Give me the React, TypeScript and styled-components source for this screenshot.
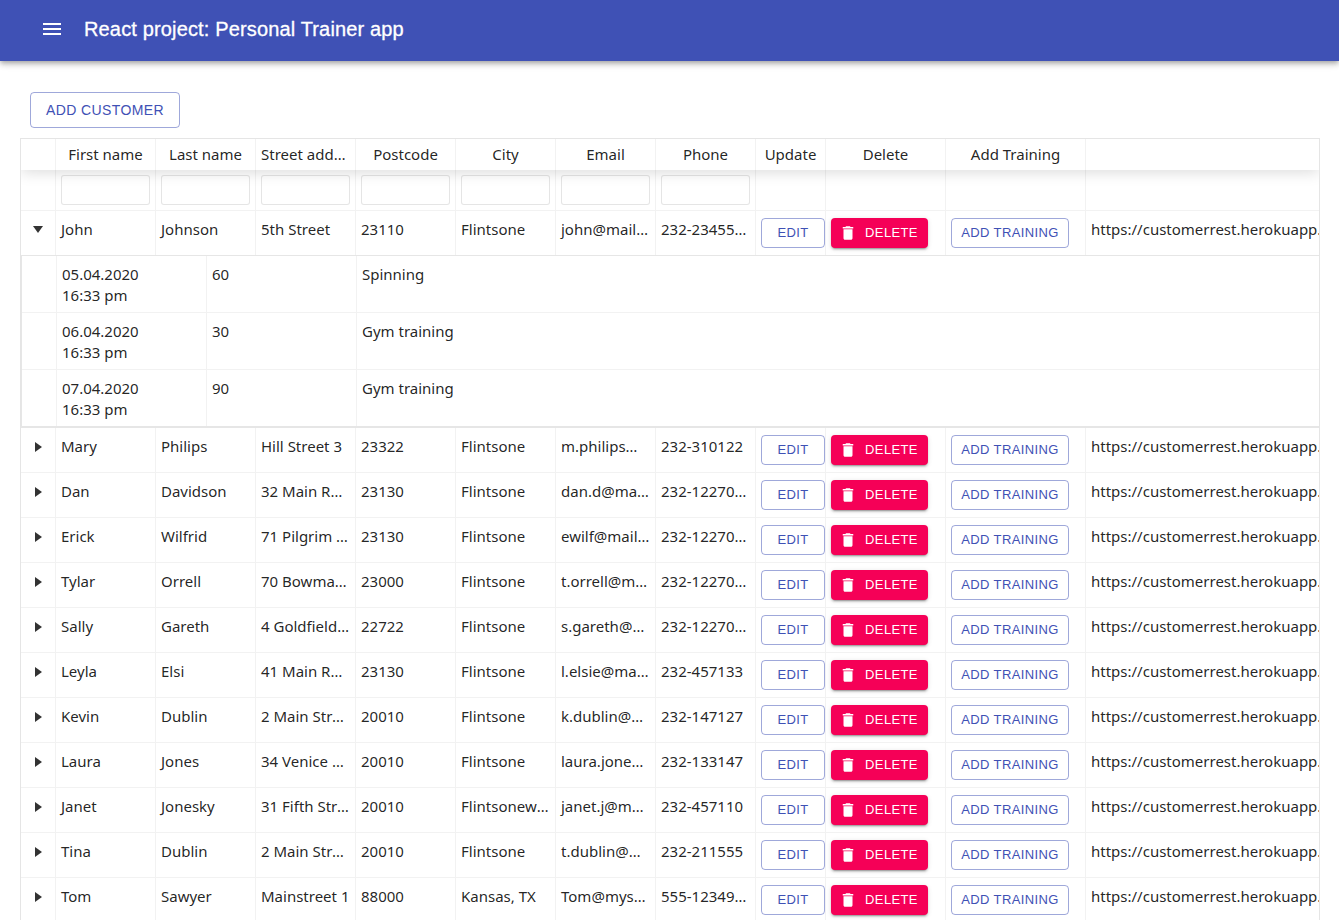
import styled, { createGlobalStyle } from "styled-components";

const GlobalStyle = createGlobalStyle`
  html, body {
    margin: 0;
    padding: 0;
    height: 920px;
    overflow: hidden;
    background: #fff;
  }
  body {
    font-family: "Noto Sans", "Open Sans", sans-serif;
    font-size: 15px;
    color: rgba(0, 0, 0, 0.87);
  }
`;

const customers = [
  ["Mary", "Philips", "Hill Street 3", "23322", "Flintsone", "m.philips@mail.com", "232-310122"],
  ["Dan", "Davidson", "32 Main Road", "23130", "Flintsone", "dan.d@mail.com", "232-12270001"],
  ["Erick", "Wilfrid", "71 Pilgrim Avenue", "23130", "Flintsone", "ewilf@mail.com", "232-12270002"],
  ["Tylar", "Orrell", "70 Bowman St.", "23000", "Flintsone", "t.orrell@mail.com", "232-12270003"],
  ["Sally", "Gareth", "4 Goldfield Rd.", "22722", "Flintsone", "s.gareth@mail.com", "232-12270004"],
  ["Leyla", "Elsi", "41 Main Road", "23130", "Flintsone", "l.elsie@mail.com", "232-457133"],
  ["Kevin", "Dublin", "2 Main Street", "20010", "Flintsone", "k.dublin@mail.com", "232-147127"],
  ["Laura", "Jones", "34 Venice Road", "20010", "Flintsone", "laura.jones@mail.com", "232-133147"],
  ["Janet", "Jonesky", "31 Fifth Street", "20010", "Flintsonewood", "janet.j@mail.com", "232-457110"],
  ["Tina", "Dublin", "2 Main Street", "20010", "Flintsone", "t.dublin@mail.com", "232-211555"],
  ["Tom", "Sawyer", "Mainstreet 1", "88000", "Kansas, TX", "Tom@mystery.com", "555-12349876"],
];

const trainings = [
  ["05.04.2020 16:33 pm", "60", "Spinning"],
  ["06.04.2020 16:33 pm", "30", "Gym training"],
  ["07.04.2020 16:33 pm", "90", "Gym training"],
];

const headers: [string, number][] = [
  ["", 35],
  ["First name", 100],
  ["Last name", 100],
  ["Street address", 100],
  ["Postcode", 100],
  ["City", 100],
  ["Email", 100],
  ["Phone", 100],
  ["Update", 70],
  ["Delete", 120],
  ["Add Training", 140],
];

const AppBar = styled.header`
  height: 61px;
  box-sizing: border-box;
  display: flex;
  align-items: center;
  padding: 0 0 3px 40px;
  gap: 20px;
  background: #3f51b5;
  color: #fff;
  box-shadow: 0 2px 4px -1px rgba(0, 0, 0, 0.2), 0 4px 5px 0 rgba(0, 0, 0, 0.14),
    0 1px 10px 0 rgba(0, 0, 0, 0.12);
  position: relative;
`;

const Title = styled.h6`
  margin: 0;
  font: 400 20px/1.6 "Liberation Sans", Arial, sans-serif;
  letter-spacing: 0.0075em;
  -webkit-text-stroke: 0.3px #fff;
`;

const Page = styled.main`
  padding: 31px 19px 0 20px;
`;

const Button = styled.button<{ $size?: "small" | "medium" }>`
  box-sizing: border-box;
  display: inline-flex;
  align-items: center;
  justify-content: center;
  background: transparent;
  color: #3f51b5;
  border: 1px solid rgba(63, 81, 181, 0.5);
  border-radius: 4px;
  font-family: "Liberation Sans", Arial, sans-serif;
  font-weight: 400;
  letter-spacing: 0.02857em;
  text-transform: uppercase;
  font-size: ${(p) => (p.$size === "small" ? "13px" : "14px")};
  height: ${(p) => (p.$size === "small" ? "30px" : "36px")};
  padding: ${(p) => (p.$size === "small" ? "0 9px 2px" : "0 15px")};
`;

const AddCustomer = styled(Button)`
  margin-left: 10px;
  margin-bottom: 10px;
  display: flex;
`;

const EditButton = styled(Button)`
  width: 64px;
`;

const TrainingButton = styled(Button)`
  width: 118px;
  white-space: nowrap;
`;

const DeleteButton = styled(Button)`
  width: 97px;
  gap: 8px;
  padding: 0 2px 2px 0;
  background: #f50057;
  color: #fff;
  border: none;
  box-shadow: 0 3px 1px -2px rgba(0, 0, 0, 0.2), 0 2px 2px 0 rgba(0, 0, 0, 0.14),
    0 1px 5px 0 rgba(0, 0, 0, 0.12);
  svg {
    margin-top: 2px;
  }
`;

const Table = styled.div`
  border: 1px solid rgba(0, 0, 0, 0.1);
  overflow: hidden;
`;

const HeadRow = styled.div`
  display: flex;
  height: 31px;
  position: relative;
  box-shadow: 0 2px 15px 0 rgba(0, 0, 0, 0.15);
`;

const HeadCell = styled.div<{ $w: number }>`
  box-sizing: border-box;
  width: ${(p) => p.$w}px;
  flex: none;
  padding: 5px;
  line-height: 21px;
  text-align: center;
  white-space: nowrap;
  overflow: hidden;
  text-overflow: ellipsis;
  border-right: 1px solid rgba(0, 0, 0, 0.05);
`;

const FilterRow = styled.div`
  display: flex;
  height: 41px;
  border-bottom: 1px solid rgba(0, 0, 0, 0.05);
  box-sizing: border-box;
`;

const FilterCell = styled.div<{ $w: number }>`
  box-sizing: border-box;
  width: ${(p) => p.$w}px;
  flex: none;
  padding: 5px;
  border-right: 1px solid rgba(0, 0, 0, 0.05);
`;

const FilterInput = styled.input`
  box-sizing: border-box;
  display: block;
  width: 100%;
  height: 30px;
  background: #fff;
  border: 1px solid rgba(0, 0, 0, 0.1);
  border-radius: 3px;
  outline: none;
`;

const Row = styled.div`
  display: flex;
  height: 45px;
  box-sizing: border-box;
  border-bottom: 1px solid rgba(0, 0, 0, 0.05);
`;

const Cell = styled.div<{ $w?: number }>`
  box-sizing: border-box;
  flex: ${(p) => (p.$w ? `none` : "1 1 0")};
  min-width: 0;
  width: ${(p) => (p.$w ? `${p.$w}px` : "auto")};
  padding: 8px 5px 6px;
  line-height: 21px;
  white-space: nowrap;
  overflow: hidden;
  text-overflow: ellipsis;
  border-right: 1px solid rgba(0, 0, 0, 0.05);
`;

const ActionCell = styled(Cell)`
  padding: 7px 5px;
`;

const UrlCell = styled(Cell)`
  padding-right: 0;
  text-overflow: clip;
  border-right: none;
`;

const Expander = styled(Cell)`
  display: flex;
  justify-content: center;
  padding: 14px 0 0;
`;

const Arrow = styled.span<{ $open?: boolean }>`
  width: 0;
  height: 0;
  border-style: solid;
  border-color: transparent;
  border-width: ${(p) => (p.$open ? "7px 5.5px 0" : "5.5px 0 5.5px 7px")};
  border-top-color: ${(p) => (p.$open ? "rgba(0,0,0,.8)" : "transparent")};
  border-left-color: ${(p) => (p.$open ? "transparent" : "rgba(0,0,0,.8)")};
  margin-top: ${(p) => (p.$open ? "1px" : "0")};
`;

const SubTable = styled.div`
  border: solid #e6e6e6;
  border-width: 1px 0 2px 1px;
  height: 173px;
  margin-top: -1px;
  box-sizing: border-box;
`;

const SubRow = styled.div`
  display: flex;
  height: 57px;
  box-sizing: border-box;
  border-bottom: 1px solid rgba(0, 0, 0, 0.05);
  &:last-child {
    height: 56px;
    border-bottom: none;
  }
`;

const SubCell = styled.div<{ $w?: number }>`
  box-sizing: border-box;
  flex: ${(p) => (p.$w ? "none" : "1 1 0")};
  width: ${(p) => (p.$w ? `${p.$w}px` : "auto")};
  padding: 8px 5px 0;
  line-height: 21px;
  border-right: 1px solid rgba(0, 0, 0, 0.05);
  &:last-child {
    border-right: none;
  }
`;

const DateText = styled.span`
  display: block;
  width: 100px;
`;

const MenuIcon = () => (
  <svg width="24" height="24" viewBox="0 0 24 24" fill="currentColor">
    <path d="M3 18h18v-2H3v2zm0-5h18v-2H3v2zm0-7v2h18V6H3z" />
  </svg>
);

const TrashIcon = () => (
  <svg width="18" height="18" viewBox="0 0 24 24" fill="currentColor">
    <path d="M6 19c0 1.1.9 2 2 2h8c1.1 0 2-.9 2-2V7H6v12zM19 4h-3.5l-1-1h-5l-1 1H5v2h14V4z" />
  </svg>
);

function CustomerRow({ data, open, id }: { data: string[]; open?: boolean; id: number }) {
  return (
    <Row>
      <Expander $w={35}>
        <Arrow $open={open} />
      </Expander>
      {data.map((value, i) => (
        <Cell $w={100} key={i}>
          {value}
        </Cell>
      ))}
      <ActionCell $w={70}>
        <EditButton $size="small">Edit</EditButton>
      </ActionCell>
      <ActionCell $w={120}>
        <DeleteButton $size="small">
          <TrashIcon />
          Delete
        </DeleteButton>
      </ActionCell>
      <ActionCell $w={140}>
        <TrainingButton $size="small">Add training</TrainingButton>
      </ActionCell>
      <UrlCell>https://customerrest.herokuapp.com/api/customers/{id}</UrlCell>
    </Row>
  );
}

export default function App() {
  return (
    <>
      <GlobalStyle />
      <AppBar>
        <MenuIcon />
        <Title>React project: Personal Trainer app</Title>
      </AppBar>
      <Page>
        <AddCustomer>Add customer</AddCustomer>
        <Table>
          <HeadRow>
            {headers.map(([label, w]) => (
              <HeadCell $w={w} key={label}>
                {label}
              </HeadCell>
            ))}
          </HeadRow>
          <FilterRow>
            {headers.map(([label, w], i) => (
              <FilterCell $w={w} key={label}>
                {i >= 1 && i <= 7 && <FilterInput />}
              </FilterCell>
            ))}
          </FilterRow>
          <CustomerRow
            open
            id={1}
            data={["John", "Johnson", "5th Street", "23110", "Flintsone", "john@mail.com", "232-2345540"]}
          />
          <SubTable>
            {trainings.map(([date, duration, activity]) => (
              <SubRow key={date}>
                <SubCell $w={35} />
                <SubCell $w={150}>
                  <DateText>{date}</DateText>
                </SubCell>
                <SubCell $w={150}>{duration}</SubCell>
                <SubCell>{activity}</SubCell>
              </SubRow>
            ))}
          </SubTable>
          {customers.map((c, i) => (
            <CustomerRow key={c[0]} data={c} id={i + 2} />
          ))}
        </Table>
      </Page>
    </>
  );
}
